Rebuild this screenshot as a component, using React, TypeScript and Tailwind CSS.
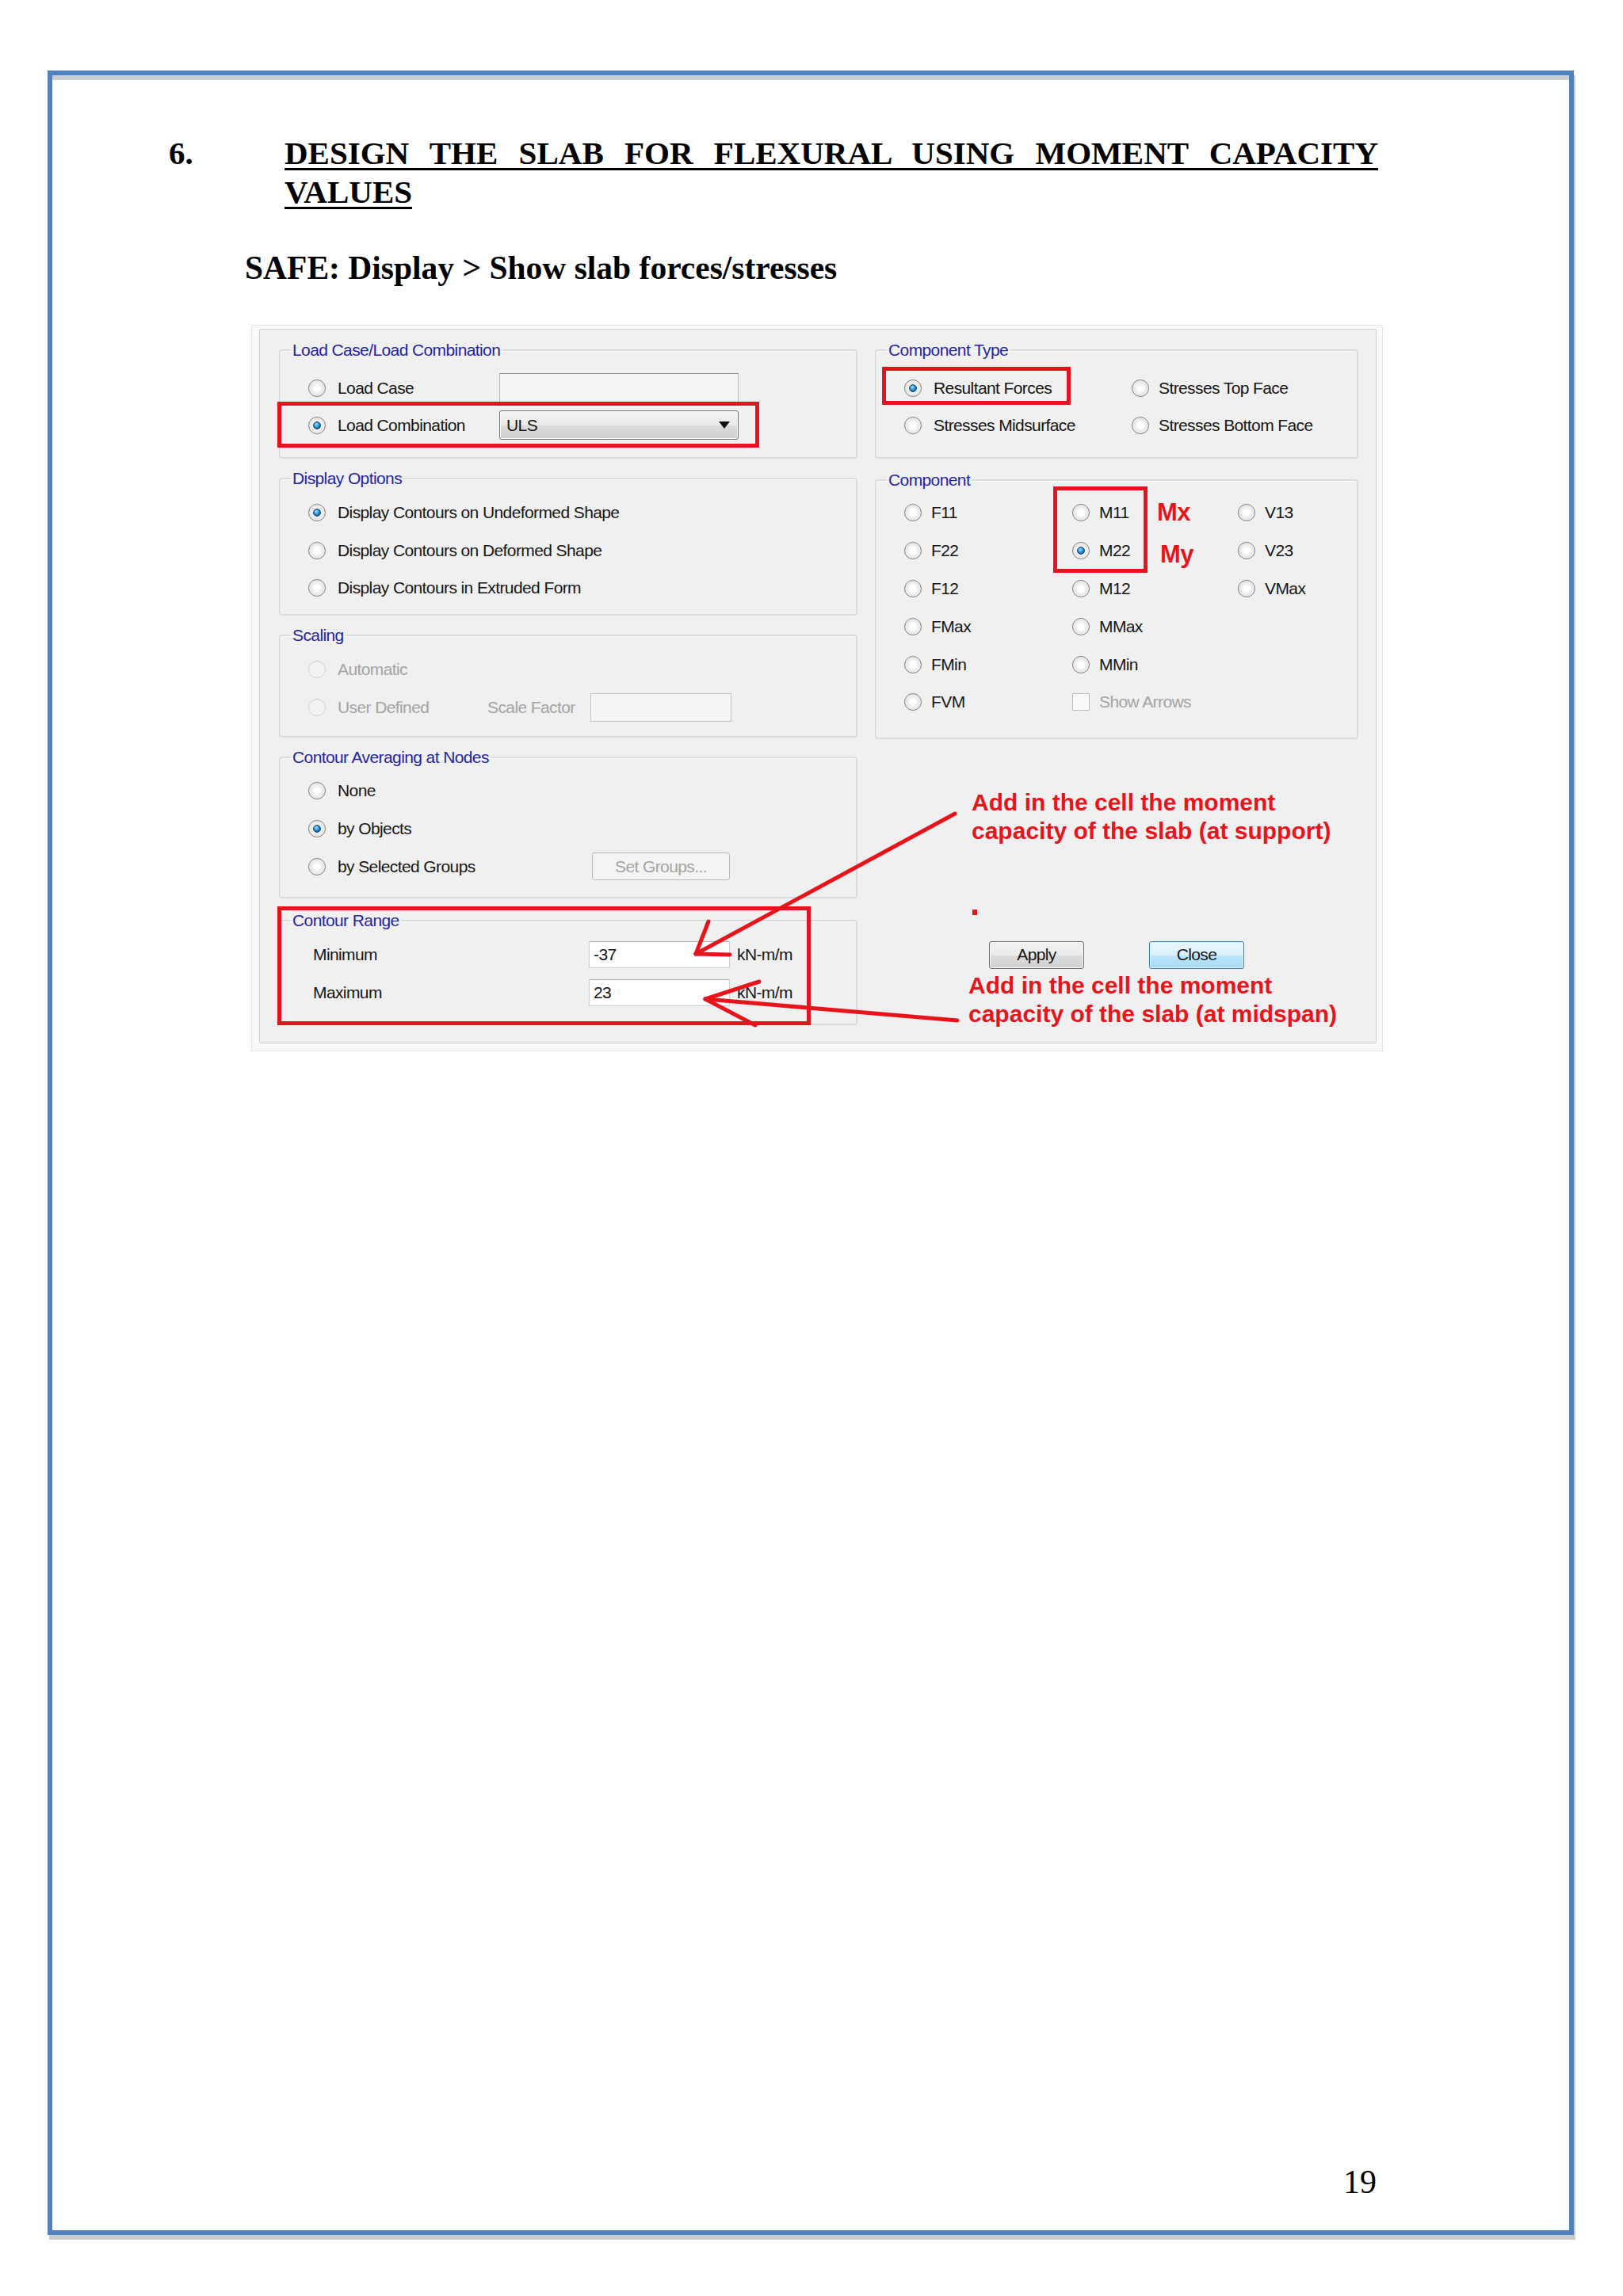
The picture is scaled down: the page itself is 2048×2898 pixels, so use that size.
import React from "react";

const SANS = "font-['Liberation_Sans',Arial,sans-serif]";
const TXT = "text-[21px] tracking-[-0.6px] text-[#151515] leading-[24px] whitespace-nowrap";
const DIS = "text-[21px] tracking-[-0.6px] text-[#a3a3a3] leading-[24px] whitespace-nowrap";

function Radio({ checked = false, disabled = false }: { checked?: boolean; disabled?: boolean }) {
  return (
    <span
      className={
        "relative block w-[22px] h-[22px] shrink-0 rounded-full border " +
        (disabled
          ? "border-[#cfcfcf] bg-[#f3f3f3]"
          : "border-[#7f7f7f] bg-[radial-gradient(circle_at_50%_50%,#ffffff_25%,#e4e4e4_60%,#bdbdbd_100%)] shadow-[inset_0_0_0_1px_#f7f7f7]")
      }
    >
      {checked && (
        <span className="absolute left-[5px] top-[5px] w-[10px] h-[10px] rounded-full border border-[#0d3f6b] bg-[radial-gradient(circle_at_40%_35%,#a8e4ff_0%,#2b90d2_45%,#0c416f_100%)]" />
      )}
    </span>
  );
}

function RRow({
  label,
  checked = false,
  disabled = false,
  h = "h-[47.5px]",
  w = "",
  gap = "ml-[15px]",
}: {
  label: string;
  checked?: boolean;
  disabled?: boolean;
  h?: string;
  w?: string;
  gap?: string;
}) {
  return (
    <div className={`flex items-center ${h} ${w}`}>
      <Radio checked={checked} disabled={disabled} />
      <span className={`${gap} ${disabled ? DIS : TXT}`}>{label}</span>
    </div>
  );
}

function Group({
  title,
  className,
  children,
}: {
  title: string;
  className: string;
  children: React.ReactNode;
}) {
  return (
    <fieldset
      className={`border-2 border-[#d9dcdf] rounded-[4px] shadow-[inset_1px_1px_0_#ffffff] p-0 m-0 min-w-0 ${className}`}
    >
      <legend className="ml-[13px] px-[2px] text-[21px] tracking-[-0.6px] leading-[24px] text-[#2424a3] whitespace-nowrap">
        {title}
      </legend>
      {children}
    </fieldset>
  );
}

function WinButton({ label, primary = false, disabled = false, cls }: { label: string; primary?: boolean; disabled?: boolean; cls: string }) {
  const base = "flex items-center justify-center rounded-[3px] border text-[21px] tracking-[-0.6px] leading-[24px] ";
  const look = disabled
    ? "border-[#b9b9b9] bg-[#f4f4f4] text-[#a3a3a3]"
    : primary
    ? "border-[#3c7fb1] bg-[linear-gradient(#eaf6fd,#d9f0fc_50%,#bee6fd_51%,#a7d9f5)] shadow-[inset_0_0_0_1px_#dff3fc] text-[#151515]"
    : "border-[#707070] bg-[linear-gradient(#f2f2f2,#ebebeb_50%,#dddddd_51%,#cfcfcf)] shadow-[inset_0_0_0_1px_#fafafa] text-[#151515]";
  return <div className={base + look + " " + cls}>{label}</div>;
}

function Dialog() {
  const C = "h-[47.8px]";
  const G = "ml-[12px]";
  return (
    <div className={`ml-[251px] mt-[47px] w-[1428px] h-[917px] border border-[#e3e3e3] bg-[#f9f9f9] pl-[9px] pt-[4px] ${SANS}`}>
      <div className="w-[1410px] h-[902px] border border-[#cfcfcf] bg-[#f0f0f0] rounded-[2px] flex pt-[14px] pl-[24px]">
        {/* Left column */}
        <div className="w-[730px] flex flex-col">
          <Group title="Load Case/Load Combination" className="h-[149px]">
            <div className="pl-[35px] pt-[12px]">
              <div className="flex items-center h-[47px]">
                <RRow label="Load Case" w="w-[241px]" h="h-[47px]" />
                <div className="w-[302px] h-[37px] border border-[#b8b8b8] border-t-[#8e8e8e] bg-[#f5f5f5]" />
              </div>
              <div className="flex items-center h-[47px]">
                <RRow label="Load Combination" checked w="w-[241px]" h="h-[47px]" />
                <div className="w-[302px] h-[37px] rounded-[3px] border border-[#707070] bg-[linear-gradient(#f2f2f2,#ebebeb_50%,#dddddd_51%,#cfcfcf)] shadow-[inset_0_0_0_1px_#fbfbfb] flex items-center justify-between pl-[8px] pr-[10px]">
                  <span className={TXT}>ULS</span>
                  <svg width="14" height="9" viewBox="0 0 14 9">
                    <path d="M0 0 L14 0 L7 9 Z" fill="#111" />
                  </svg>
                </div>
              </div>
            </div>
          </Group>

          <Group title="Display Options" className="h-[185px] mt-[13px]">
            <div className="pl-[35px] pt-[7.5px]">
              <RRow label="Display Contours on Undeformed Shape" checked h="h-[47.5px]" />
              <RRow label="Display Contours on Deformed Shape" h="h-[47px]" />
              <RRow label="Display Contours in Extruded Form" h="h-[47px]" />
            </div>
          </Group>

          <Group title="Scaling" className="h-[141px] mt-[13px]">
            <div className="pl-[35px] pt-[7px]">
              <RRow label="Automatic" disabled h="h-[48px]" />
              <div className="flex items-center h-[48px]">
                <RRow label="User Defined" disabled w="w-[226px]" h="h-[48px]" />
                <span className={DIS + " w-[130px]"}>Scale Factor</span>
                <div className="w-[178px] h-[36px] border border-[#c3c3c3] bg-[#f5f5f5]" />
              </div>
            </div>
          </Group>

          <Group title="Contour Averaging at Nodes" className="h-[190px] mt-[13px]">
            <div className="pl-[35px] pt-[5.5px]">
              <RRow label="None" h="h-[48px]" />
              <RRow label="by Objects" checked h="h-[48px]" />
              <div className="flex items-center h-[48px]">
                <RRow label="by Selected Groups" w="w-[358px]" h="h-[48px]" />
                <WinButton label="Set Groups..." disabled cls="w-[174px] h-[35px]" />
              </div>
            </div>
          </Group>

          <Group title="Contour Range" className="h-[144px] mt-[16px]">
            <div className="pl-[41px] pt-[6.5px]">
              <div className="flex items-center h-[48px]">
                <span className={TXT + " w-[348px]"}>Minimum</span>
                <div className="w-[178px] h-[34px] border border-[#d0d0d0] border-t-[#abadb3] bg-white flex items-center pl-[5px]">
                  <span className={TXT}>-37</span>
                </div>
                <span className={TXT + " ml-[9px]"}>kN-m/m</span>
              </div>
              <div className="flex items-center h-[48px]">
                <span className={TXT + " w-[348px]"}>Maximum</span>
                <div className="w-[178px] h-[34px] border border-[#d0d0d0] border-t-[#abadb3] bg-white flex items-center pl-[5px]">
                  <span className={TXT}>23</span>
                </div>
                <span className={TXT + " ml-[9px]"}>kN-m/m</span>
              </div>
            </div>
          </Group>
        </div>

        {/* Right column */}
        <div className="w-[610px] ml-[22px] flex flex-col">
          <Group title="Component Type" className="h-[149px]">
            <div className="pl-[35px] pt-[12px] grid grid-cols-[287px_1fr]">
              <RRow label="Resultant Forces" checked h="h-[47px]" />
              <RRow label="Stresses Top Face" h="h-[47px]" gap={G} />
              <RRow label="Stresses Midsurface" h="h-[47px]" />
              <RRow label="Stresses Bottom Face" h="h-[47px]" gap={G} />
            </div>
          </Group>

          <Group title="Component" className="h-[339px] mt-[15px]">
            <div className="pl-[35px] pt-[5.5px] grid grid-cols-[212px_209px_1fr]">
              <RRow label="F11" h={C} gap={G} />
              <RRow label="M11" h={C} gap={G} />
              <RRow label="V13" h={C} gap={G} />
              <RRow label="F22" h={C} gap={G} />
              <RRow label="M22" checked h={C} gap={G} />
              <RRow label="V23" h={C} gap={G} />
              <RRow label="F12" h={C} gap={G} />
              <RRow label="M12" h={C} gap={G} />
              <RRow label="VMax" h={C} gap={G} />
              <RRow label="FMax" h={C} gap={G} />
              <RRow label="MMax" h={C} gap={G} />
              <div />
              <RRow label="FMin" h={C} gap={G} />
              <RRow label="MMin" h={C} gap={G} />
              <div />
              <RRow label="FVM" h={C} gap={G} />
              <div className={`flex items-center ${C}`}>
                <span className="block w-[22px] h-[22px] border border-[#bdbdbd] bg-[#fafafa] shrink-0" />
                <span className={"ml-[12px] " + DIS}>Show Arrows</span>
              </div>
              <div />
            </div>
          </Group>

          <div className="ml-[122px] mt-[61.6px] text-[30px] leading-[36px] font-bold text-[#e8141c] whitespace-nowrap">
            <div>Add in the cell the moment</div>
            <div>capacity of the slab (at support)</div>
          </div>
          <div className="ml-[123px] mt-[81px] w-[6px] h-[7px] bg-[#e8141c]" />
          <div className="flex mt-[33px] ml-[144px]">
            <WinButton label="Apply" cls="w-[120px] h-[35px]" />
            <WinButton label="Close" primary cls="w-[120px] h-[35px] ml-[82px]" />
          </div>
          <div className="ml-[118px] mt-[3.6px] text-[30px] leading-[36px] font-bold text-[#e8141c] whitespace-nowrap">
            <div>Add in the cell the moment</div>
            <div>capacity of the slab (at midspan)</div>
          </div>
        </div>
      </div>
    </div>
  );
}

export default function App() {
  const serif = "font-['Liberation_Serif','Times_New_Roman',serif]";
  return (
    <div className="relative w-[2048px] h-[2898px] bg-white overflow-hidden pt-[89px] pl-[60px]">
      <div className="w-[1926px] h-[2732px] border-[6px] border-[#4f81bd] shadow-[2px_6px_0_0_#cbcbcb] flex flex-col">
        <div className="h-[6px] shrink-0 bg-[#c9ced1]" />

        <div className={`flex pl-[147px] mt-[68px] text-black font-bold text-[41px] leading-[49px] ${serif}`}>
          <div className="w-[146px] shrink-0">6.</div>
          <div className="w-[1380px] text-justify underline decoration-[3px] underline-offset-[5px]">
            DESIGN THE SLAB FOR FLEXURAL USING MOMENT CAPACITY VALUES
          </div>
        </div>

        <div className={`ml-[243px] mt-[47px] text-black font-bold text-[41.5px] leading-[49px] whitespace-nowrap ${serif}`}>
          SAFE: Display &gt; Show slab forces/stresses
        </div>

        <Dialog />

        <div className={`mt-auto flex justify-end pr-[243px] pb-[37px] text-[42px] leading-[48px] text-black ${serif}`}>
          19
        </div>
      </div>

      {/* annotation overlays */}
      <div className="absolute left-[350px] top-[507px] w-[608px] h-[58px] border-[5px] border-[#e5131d]" />
      <div className="absolute left-[1113px] top-[463px] w-[238px] h-[48px] border-[5px] border-[#e5131d]" />
      <div className="absolute left-[1329px] top-[614px] w-[119px] h-[109px] border-[5px] border-[#e5131d]" />
      <div className="absolute left-[350px] top-[1144px] w-[673px] h-[150px] border-[5px] border-[#e5131d]" />

      <div className={`absolute left-[1460px] top-[631px] text-[31px] leading-[31px] font-bold tracking-[-0.5px] text-[#e8141c] ${SANS}`}>
        Mx
      </div>
      <div className={`absolute left-[1464px] top-[684px] text-[31px] leading-[31px] font-bold tracking-[-0.5px] text-[#e8141c] ${SANS}`}>
        My
      </div>

      <svg
        className="absolute left-0 top-0 pointer-events-none"
        width="2048"
        height="2898"
        viewBox="0 0 2048 2898"
      >
        <g stroke="#e8141c" strokeWidth="5" strokeLinecap="round" fill="none">
          <path d="M1205 1027 L878 1204" />
          <path d="M878 1204 L894 1163" />
          <path d="M878 1204 L921 1205" />
          <path d="M1208 1288 L890 1261" />
          <path d="M890 1261 L958 1239" />
          <path d="M890 1261 L953 1294" />
        </g>
      </svg>
    </div>
  );
}
